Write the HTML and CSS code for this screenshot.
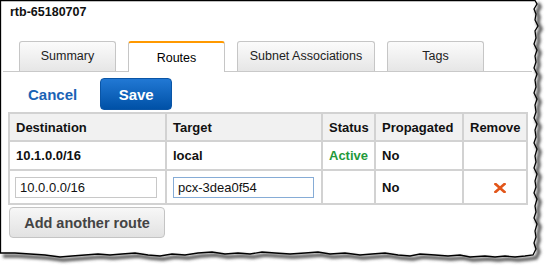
FILE: index.html
```html
<!DOCTYPE HTML>
<html lang="en-US">
<head>
	<meta http-equiv="Content-Type" content="text/html;charset=UTF-8">
	<title>rtb-65180707 - Routes</title>
	<link rel="stylesheet" href="styles.css">
</head>
<body>
	<div class="frame">
		<h1 class="title">rtb-65180707</h1>
		<ul class="tabs">
			<li><a href="#">Summary</a></li>
			<li class="active"><a href="#">Routes</a></li>
			<li><a href="#">Subnet Associations</a></li>
			<li><a href="#">Tags</a></li>
		</ul>
		<div class="actions">
			<a href="#" class="cancel">Cancel</a>
			<button class="btn-save">Save</button>
		</div>
		<table class="routes">
			<colgroup>
				<col class="c-dest"><col class="c-target"><col class="c-status"><col class="c-prop"><col class="c-remove">
			</colgroup>
			<tr class="head">
				<th>Destination</th><th>Target</th><th>Status</th><th>Propagated</th><th>Remove</th>
			</tr>
			<tr class="fixed">
				<td>10.1.0.0/16</td><td>local</td><td class="active">Active</td><td>No</td><td></td>
			</tr>
			<tr class="edit">
				<td><input type="text" class="dest" value="10.0.0.0/16"></td>
				<td><input type="text" class="target" value="pcx-3dea0f54"></td>
				<td></td>
				<td>No</td>
				<td class="remove"><svg width="12" height="10" viewBox="0 0 12 10"><path d="M1.5 1 L10.5 9 M10.5 1 L1.5 9" stroke="#e2561a" stroke-width="2.6" stroke-linecap="square"/></svg></td>
			</tr>
		</table>
		<button class="btn-add">Add another route</button>
		<svg class="torn" width="550" height="269" viewBox="0 0 550 269">
			<defs>
				<filter id="blur" x="-5%" y="-5%" width="110%" height="110%"><feGaussianBlur stdDeviation="1.5"/></filter>
			</defs>
			<path class="shade" filter="url(#blur)" transform="translate(3,3)" d="M535 0 L537 4 L534 9 L536 14 L535 20 L538 26 L535 31 L536 38 L534 44 L537 50 L535 56 L536 62 L534 68 L537 74 L535 80 L536 87 L534 93 L537 99 L535 105 L536 112 L534 118 L537 124 L535 130 L536 137 L534 143 L537 149 L535 156 L536 162 L534 168 L537 174 L535 181 L536 187 L534 193 L537 199 L535 206 L536 212 L534 218 L537 224 L535 231 L536 237 L534 243 L536 249 L533 255 L525 256 L515 257 L505 256 L495 257 L485 256 L470 257 L460 255 L448 256 L435 255 L420 254 L410 256 L398 255 L385 253 L372 254 L360 255 L345 253 L330 254 L318 252 L305 253 L290 254 L275 253 L262 252 L250 254 L238 253 L225 254 L212 252 L198 253 L185 255 L172 254 L160 256 L148 255 L135 253 L122 254 L110 255 L98 254 L85 255 L72 256 L60 257 L45 255 L30 254 L15 253 L0 253"/>
			<path class="edge" d="M0.5 253 L0.5 0.5 L535 0.5 L537 4 L534 9 L536 14 L535 20 L538 26 L535 31 L536 38 L534 44 L537 50 L535 56 L536 62 L534 68 L537 74 L535 80 L536 87 L534 93 L537 99 L535 105 L536 112 L534 118 L537 124 L535 130 L536 137 L534 143 L537 149 L535 156 L536 162 L534 168 L537 174 L535 181 L536 187 L534 193 L537 199 L535 206 L536 212 L534 218 L537 224 L535 231 L536 237 L534 243 L536 249 L533 255 L525 256 L515 257 L505 256 L495 257 L485 256 L470 257 L460 255 L448 256 L435 255 L420 254 L410 256 L398 255 L385 253 L372 254 L360 255 L345 253 L330 254 L318 252 L305 253 L290 254 L275 253 L262 252 L250 254 L238 253 L225 254 L212 252 L198 253 L185 255 L172 254 L160 256 L148 255 L135 253 L122 254 L110 255 L98 254 L85 255 L72 256 L60 257 L45 255 L30 254 L15 253 L0 253"/>
		</svg>
	</div>
</body>
</html>
```

FILE: styles.css
```css
body{
	padding: 0;
	margin: 0;
	background-color: #fff;
}
.frame{
	position: relative;
	width: 550px;
	height: 269px;
	font-family: "Liberation Sans", Arial, sans-serif;
	color: #111;
	overflow: hidden;
}
.title{
	margin: 0;
	padding: 4px 0 0 10px;
	font-size: 12.5px;
	line-height: 16px;
	font-weight: bold;
}
.tabs{
	display: flex;
	gap: 12px;
	list-style: none;
	margin: 21px 0 0 3px;
	padding: 0 0 0 16px;
	width: 513px;
	height: 30px;
	border-bottom: 1px solid #c9c9c9;
}
.tabs li{
	box-sizing: border-box;
	width: 97px;
	height: 30px;
	border: 1px solid #c6c6c6;
	border-bottom: none;
	border-radius: 3px 3px 0 0;
	background: linear-gradient(#fbfbfb, #e6e6e6);
	text-align: center;
}
.tabs li a{
	display: block;
	line-height: 29px;
	font-size: 12.5px;
	color: #222;
	text-decoration: none;
}
.tabs li:nth-child(3){
	width: 138px;
}
.tabs li.active{
	height: 31px;
	border-top: 2px solid #f90;
	background: #fff;
}
.tabs li.active a{
	line-height: 30px;
	color: #000;
}
.actions{
	display: flex;
	align-items: center;
	padding: 6px 0 0 28px;
	height: 32px;
}
.cancel{
	font-size: 15px;
	font-weight: bold;
	color: #1a63b5;
	text-decoration: none;
}
.btn-save{
	box-sizing: border-box;
	margin-left: 23px;
	width: 72px;
	height: 32px;
	border: 1px solid #0a55a6;
	border-radius: 4px;
	background: linear-gradient(#2178d4, #0051a7);
	color: #fff;
	font-family: inherit;
	font-size: 15px;
	font-weight: bold;
	padding: 0;
}
.routes{
	margin: 2px 0 0 8px;
	width: 520px;
	table-layout: fixed;
	border-collapse: separate;
	border-spacing: 0;
	border-left: 2px solid #d2d2d2;
	border-top: 2px solid #d2d2d2;
	font-size: 13px;
}
.c-dest{ width: 157px; }
.c-target{ width: 156px; }
.c-status{ width: 53px; }
.c-prop{ width: 88px; }
.c-remove{ width: 64px; }
.routes th,
.routes td{
	box-sizing: border-box;
	padding: 0 0 0 6px;
	border-right: 2px solid #d2d2d2;
	border-bottom: 2px solid #d2d2d2;
	text-align: left;
	vertical-align: middle;
	font-weight: bold;
	white-space: nowrap;
}
.routes .head th{
	height: 28px;
	background: #f1f1f1;
}
.routes .fixed td{
	height: 29px;
}
.routes .edit td{
	height: 34px;
}
.routes td.active{
	color: #23993a;
}
.routes td.remove{
	padding: 3px 0 0 30px;
}
.routes input{
	box-sizing: border-box;
	height: 21px;
	margin: 1px 0 0 0;
	padding: 0 0 0 4px;
	border: 1px solid #c8c8c8;
	font-family: inherit;
	font-size: 13px;
	color: #111;
}
.routes input.dest{
	width: 142px;
	margin-left: -1px;
}
.routes input.target{
	width: 141px;
	border-color: #86acd6;
}
.btn-add{
	display: block;
	box-sizing: border-box;
	margin: 2px 0 0 9px;
	width: 156px;
	height: 31px;
	padding: 0;
	border: 1px solid #c4c4c4;
	border-radius: 4px;
	background: linear-gradient(#f7f7f7, #e2e2e2);
	font-family: inherit;
	font-size: 14.5px;
	font-weight: bold;
	color: #444;
}
.torn{
	position: absolute;
	top: 0;
	left: 0;
	pointer-events: none;
}
.torn .shade{
	fill: none;
	stroke: #555;
	stroke-width: 3.5;
}
.torn .edge{
	fill: none;
	stroke: #000;
	stroke-width: 1.3;
}
```
